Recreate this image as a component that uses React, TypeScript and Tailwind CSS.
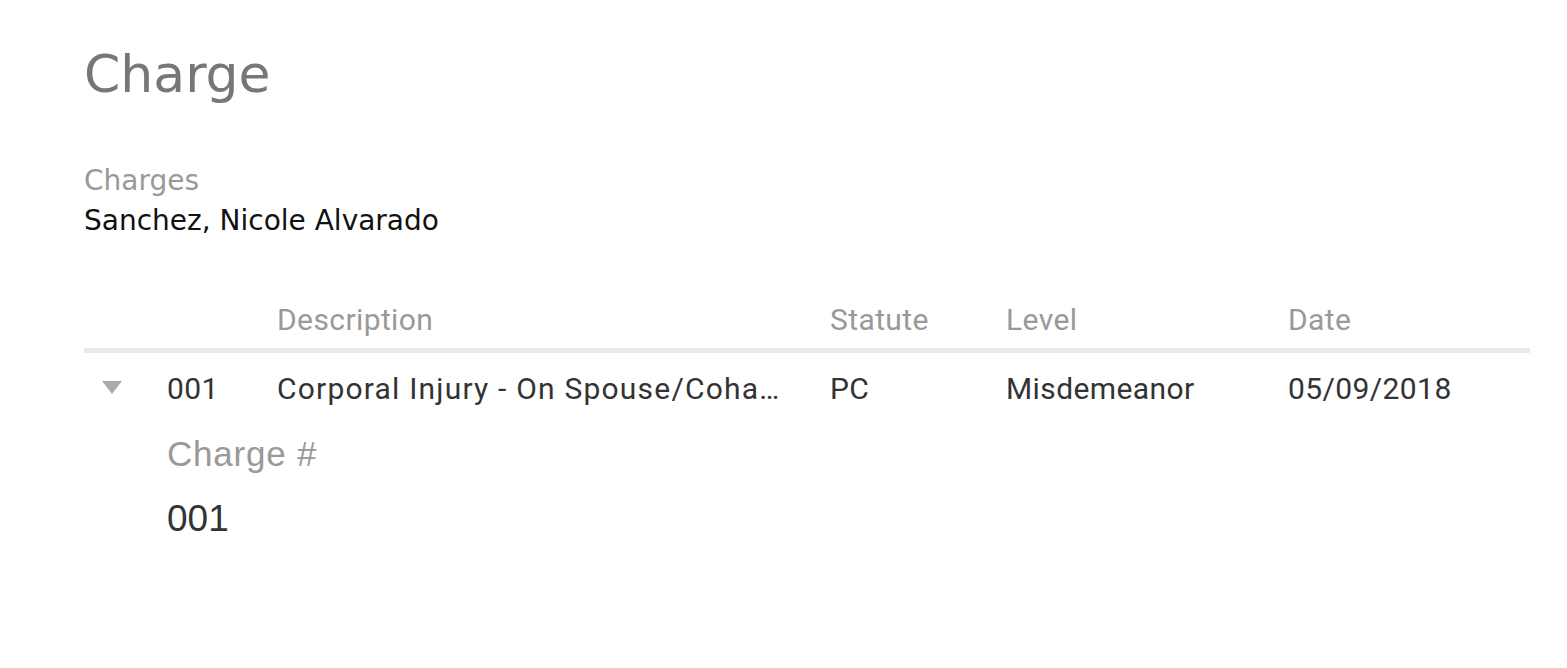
export default function App() {
  const cell = "font-['Roboto',sans-serif] text-[30px] tracking-[0.4px]";
  return (
    <div className="min-h-screen bg-white pl-[84px] pr-[37px] pt-[39px]">
      <h1 className="font-['DejaVu_Sans',sans-serif] text-[52px] leading-[70px] text-[#777777]">Charge</h1>

      <div className="mt-[52px] font-['DejaVu_Sans',sans-serif] text-[28px] leading-[40px]">
        <div className="text-[#999999]">Charges</div>
        <div className="text-[#111111]">Sanchez, Nicole Alvarado</div>
      </div>

      <div className="mt-[50px]">
        <div className={`flex items-center h-[62px] border-b-[5px] border-[#e9e9e9] text-[#999999] ${cell}`}>
          <div className="w-[83px]" />
          <div className="w-[110px]" />
          <div className="w-[553px]">Description</div>
          <div className="w-[176px]">Statute</div>
          <div className="w-[282px]">Level</div>
          <div>Date</div>
        </div>
        <div className={`flex items-center h-[70px] text-[#333333] ${cell}`}>
          <div className="w-[83px] flex pl-[18px]">
            <svg width="20" height="14" viewBox="0 0 20 14">
              <polygon points="0,0 20,0 10,13" fill="#aaaaaa" />
            </svg>
          </div>
          <div className="w-[110px]">001</div>
          <div className="w-[553px] whitespace-nowrap tracking-[1.2px]">Corporal Injury - On Spouse/Coha…</div>
          <div className="w-[176px]">PC</div>
          <div className="w-[282px]">Misdemeanor</div>
          <div>05/09/2018</div>
        </div>
        <div className="mt-[11px] pl-[83px] font-['Liberation_Sans',sans-serif]">
          <div className="text-[35px] leading-[40px] tracking-[0.8px] text-[#999999]">Charge #</div>
          <div className="mt-[25px] text-[37px] leading-[40px] text-[#333333]">001</div>
        </div>
      </div>
    </div>
  );
}
